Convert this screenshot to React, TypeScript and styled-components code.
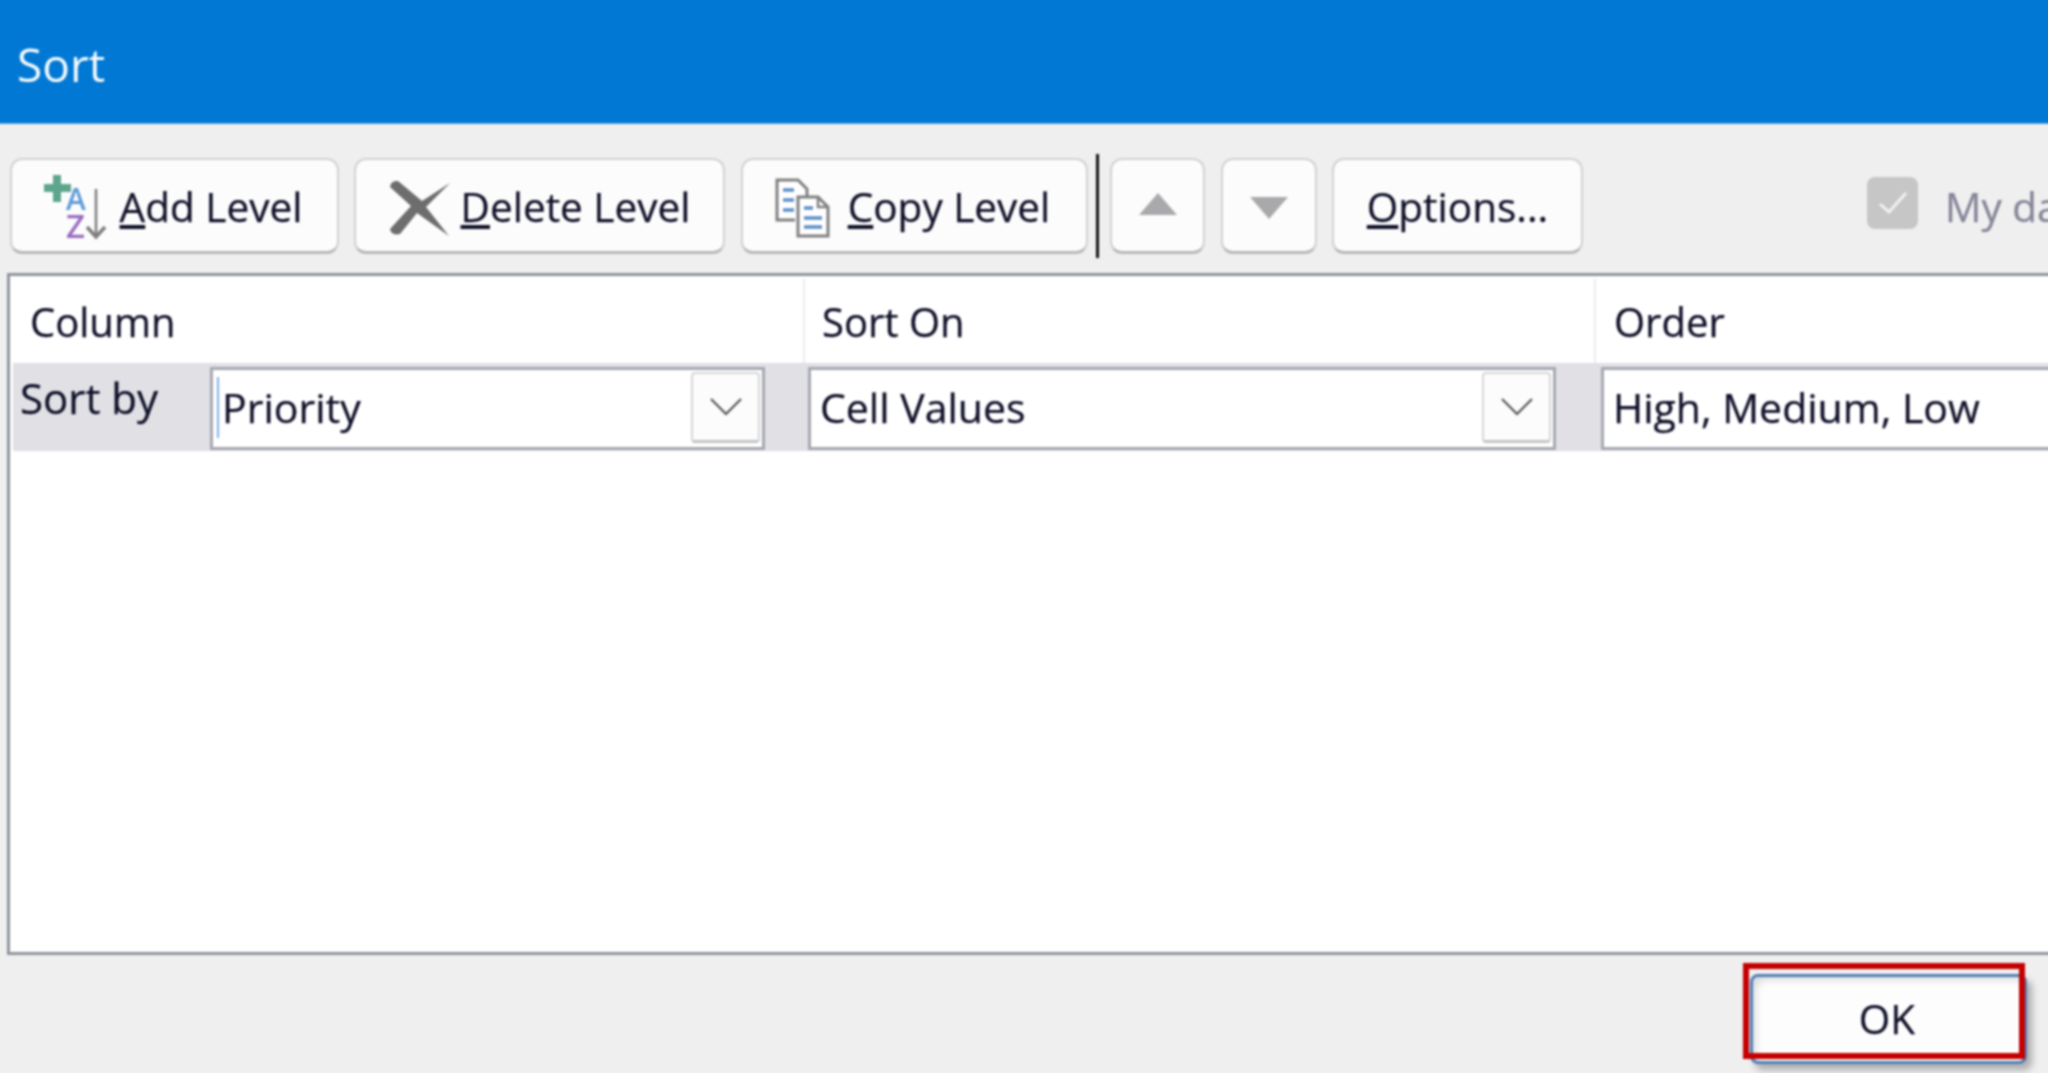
import styled, { createGlobalStyle } from 'styled-components';

const GlobalStyle = createGlobalStyle`
  html, body {
    margin: 0;
    padding: 0;
    background: #efefef;
    overflow: hidden;
  }
`;

// the extra 10px round the edge keeps the blur from fading out at the window border
const Dialog = styled.div`
  box-sizing: border-box;
  width: 2068px;
  height: 1093px;
  margin: -10px;
  padding: 0 10px;
  overflow: hidden;
  background: #efefef;
  color: #0f0f28;
  font-family: 'Open Sans', 'Noto Sans', sans-serif;
  font-size: 40.5px;
  line-height: 1;
  white-space: nowrap;
  -webkit-text-stroke: 0.25px;
  filter: blur(0.8px);
`;

const TitleBar = styled.div`
  display: flex;
  align-items: center;
  height: 134px;
  margin: 0 -10px;
  padding: 14px 0 0 27px;
  box-sizing: border-box;
  background: #0179d4;
  border-bottom: 1px solid #5aa7e4;
  color: #f4f9fd;
  font-size: 46px;
  -webkit-text-stroke: 0;
`;

const Toolbar = styled.div`
  display: flex;
  align-items: center;
  height: 96px;
  margin: 34px 0 19px 10px;
`;

const ToolButton = styled.div<{ $width: number; $gapAfter: number; $iconGap?: number; $nudge?: number }>`
  display: flex;
  flex: none;
  align-items: center;
  justify-content: center;
  gap: ${(p) => p.$iconGap ?? 10}px;
  box-sizing: border-box;
  width: ${(p) => p.$width}px;
  height: 96px;
  margin-right: ${(p) => p.$gapAfter}px;
  padding: 4px ${(p) => p.$nudge ?? 0}px 0 0;
  background: #fcfcfc;
  border: 2px solid #d2d2d2;
  border-bottom: 3px solid #b8b8b8;
  border-radius: 12px;
`;

const Separator = styled.div`
  flex: none;
  width: 3px;
  height: 104px;
  margin-right: 11px;
  background: #111;
`;

const CheckBox = styled.div`
  display: flex;
  flex: none;
  align-items: center;
  justify-content: center;
  width: 51px;
  height: 52px;
  margin: 0 27px 6px 284px;
  background: #c6c6c6;
  border-radius: 8px;
`;

const CheckLabel = styled.span`
  color: #85859a;
  padding-top: 2px;
`;

const Panel = styled.div`
  box-sizing: border-box;
  width: 2100px;
  height: 682px;
  margin-left: 7px;
  padding: 3px 0 0 3px;
  background: #fff;
  border: 3px solid #8f949d;
`;

const HeaderRow = styled.div`
  display: flex;
  height: 84px;
  font-size: 40px;
`;

const HeaderCell = styled.div<{ $width: number; $pad: number }>`
  display: flex;
  flex: none;
  align-items: center;
  box-sizing: border-box;
  width: ${(p) => p.$width}px;
  padding: 2px 0 0 ${(p) => p.$pad}px;
  border-right: 2px solid #ececec;
  &:last-child {
    border-right: none;
  }
`;

const LevelRow = styled.div`
  display: flex;
  align-items: center;
  height: 88px;
  background: #e0e0e5;
`;

const RowLabel = styled.div`
  flex: none;
  box-sizing: border-box;
  width: 197px;
  height: 88px;
  padding: 14px 0 0 7px;
  font-size: 42px;
`;

const Select = styled.div<{ $width: number; $gapAfter: number }>`
  position: relative;
  display: flex;
  flex: none;
  align-items: center;
  box-sizing: border-box;
  width: ${(p) => p.$width}px;
  height: 83px;
  margin: 2px ${(p) => p.$gapAfter}px 0 0;
  padding: 0 0 2px 9px;
  background: #fff;
  border: 3px solid #a6a8b0;
  font-size: 41px;
`;

const SelectText = styled.span`
  flex: 1;
`;

const Caret = styled.span`
  position: absolute;
  left: 4px;
  top: 7px;
  width: 2px;
  height: 61px;
  background: #7db0e8;
`;

const DropButton = styled.div`
  display: flex;
  flex: none;
  align-items: center;
  justify-content: center;
  box-sizing: border-box;
  width: 69px;
  height: 71px;
  margin-right: 2px;
  background: #fcfcfc;
  border: 2px solid #d6d6d6;
  border-bottom: 3px solid #c4c4c4;
  border-radius: 4px;
`;

const Footer = styled.div`
  display: flex;
  justify-content: flex-end;
  padding: 19px 21px 0 0;
`;

const OkButton = styled.div`
  position: relative;
  display: flex;
  align-items: center;
  justify-content: center;
  box-sizing: border-box;
  width: 277px;
  height: 90px;
  padding-right: 3px;
  background: #fdfdfd;
  border: 3px solid #4f7fb8;
  border-radius: 8px;
  box-shadow: 5px 6px 7px rgba(0, 0, 0, 0.28), inset 8px 8px 8px -6px rgba(0, 0, 0, 0.16);
`;

const Highlight = styled.div`
  position: absolute;
  left: -10px;
  top: -14px;
  width: 282px;
  height: 96px;
  box-sizing: border-box;
  border: 6px solid #c40000;
`;

const ArrowSvg = styled.svg<{ $down?: boolean }>`
  margin: ${(p) => (p.$down ? '0' : '0 0 8px')};
`;

const AddIcon = () => (
  <svg width="66" height="66" viewBox="0 0 66 66" overflow="visible">
    <path d="M9 0h8v9h10v8H17v10H9V17H0V9h9z" fill="#5da58c" />
    <text fontFamily="'Open Sans', sans-serif" fontWeight="600" stroke="none">
      <tspan x="22" y="35" fontSize="30" fill="#5f9bd8">A</tspan>
      <tspan x="22" y="63" fontSize="33" fill="#9a6cc0">Z</tspan>
    </text>
    <path d="M52 14v47" stroke="#7d7d7d" strokeWidth="2.5" fill="none" />
    <path d="M43 52l9 10 9-10" stroke="#7d7d7d" strokeWidth="3.5" fill="none" />
  </svg>
);

const DeleteIcon = () => (
  <svg width="62" height="58" viewBox="0 0 62 58">
    <path d="M1 8Q2 1 9 2L33 22 61 4 37 28 60 57 28 34 11 55Q2 57 1 50L22 27Z" fill="#6d6d6d" />
  </svg>
);

const CopyIcon = () => (
  <svg width="56" height="60" viewBox="0 0 56 60">
    <path d="M20 42H2V2h21l9 9v9" fill="#fff" stroke="#808080" strokeWidth="3" />
    <path d="M8 12h11M8 22h11M8 32h11" stroke="#5b8fc9" strokeWidth="3.5" />
    <path d="M23 19h20l10 10v29H23z" fill="#fff" stroke="#808080" strokeWidth="3" />
    <path d="M43 19v10h10" fill="none" stroke="#808080" strokeWidth="2.5" />
    <path d="M29 30h9M29 40h18M29 49h18" stroke="#5b8fc9" strokeWidth="3.5" />
  </svg>
);

const ArrowIcon = ({ down }: { down?: boolean }) => (
  <ArrowSvg $down={down} width="38" height="22" viewBox="0 0 38 22">
    <path d={down ? 'M0 0h38L19 22z' : 'M19 0l19 22H0z'} fill="#a9a9ac" />
  </ArrowSvg>
);

const CheckIcon = () => (
  <svg width="30" height="24" viewBox="0 0 30 24">
    <path d="M2 13l9 8L28 2" fill="none" stroke="#f2f2f2" strokeWidth="3" />
  </svg>
);

const Chevron = () => (
  <svg width="32" height="18" viewBox="0 0 32 18">
    <path d="M1 1l15 15L31 1" fill="none" stroke="#555" strokeWidth="2.2" />
  </svg>
);

export default function App() {
  return (
    <Dialog>
      <GlobalStyle />
      <TitleBar>Sort</TitleBar>
      <Toolbar>
        <ToolButton $width={329} $gapAfter={15} $nudge={3}>
          <AddIcon />
          <span><u>A</u>dd Level</span>
        </ToolButton>
        <ToolButton $width={371} $gapAfter={16}>
          <DeleteIcon />
          <span><u>D</u>elete Level</span>
        </ToolButton>
        <ToolButton $width={347} $gapAfter={8} $iconGap={17} $nudge={4}>
          <CopyIcon />
          <span><u>C</u>opy Level</span>
        </ToolButton>
        <Separator />
        <ToolButton $width={95} $gapAfter={16}>
          <ArrowIcon />
        </ToolButton>
        <ToolButton $width={96} $gapAfter={15}>
          <ArrowIcon down />
        </ToolButton>
        <ToolButton $width={251} $gapAfter={0}>
          <span><u>O</u>ptions...</span>
        </ToolButton>
        <CheckBox>
          <CheckIcon />
        </CheckBox>
        <CheckLabel>My data has headers</CheckLabel>
      </Toolbar>
      <Panel>
        <HeaderRow>
          <HeaderCell $width={792} $pad={17}>Column</HeaderCell>
          <HeaderCell $width={791} $pad={17}>Sort On</HeaderCell>
          <HeaderCell $width={500} $pad={18}>Order</HeaderCell>
        </HeaderRow>
        <LevelRow>
          <RowLabel>Sort by</RowLabel>
          <Select $width={555} $gapAfter={43}>
            <Caret />
            <SelectText>Priority</SelectText>
            <DropButton><Chevron /></DropButton>
          </Select>
          <Select $width={748} $gapAfter={45}>
            <SelectText>Cell Values</SelectText>
            <DropButton><Chevron /></DropButton>
          </Select>
          <Select $width={500} $gapAfter={0}>
            <SelectText>High, Medium, Low</SelectText>
          </Select>
        </LevelRow>
      </Panel>
      <Footer>
        <OkButton>
          OK
          <Highlight />
        </OkButton>
      </Footer>
    </Dialog>
  );
}
